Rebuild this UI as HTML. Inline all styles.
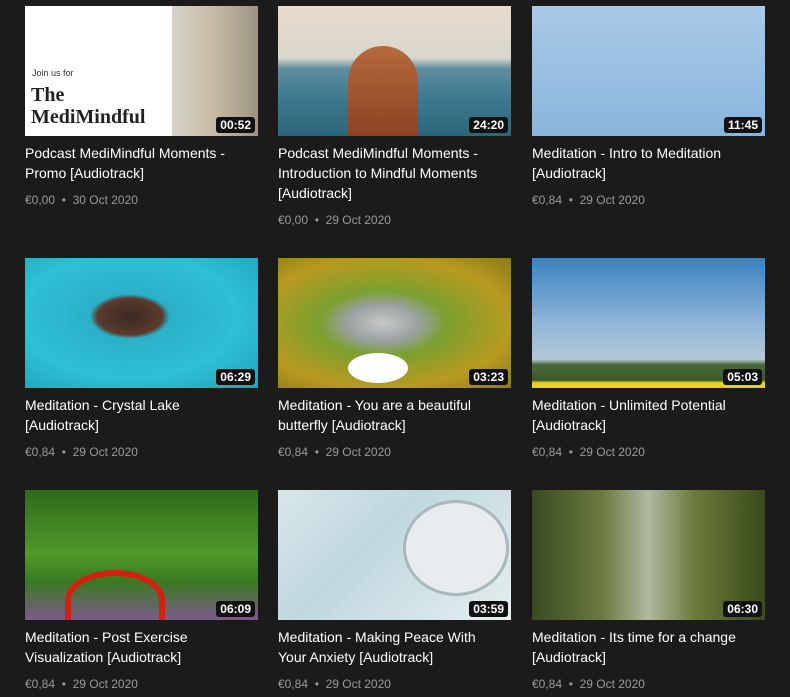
<!DOCTYPE html>
<html><head><meta charset="utf-8"><style>
body{margin:0;background:#1b1b1b;width:790px;height:697px;overflow:hidden;font-family:"Liberation Sans",sans-serif;position:relative}
.c{position:absolute;width:233px}
.t{position:relative;width:233px;height:130px;overflow:hidden}
.d{position:absolute;right:3px;bottom:3px;background:#111;color:#fff;font-weight:bold;font-size:12px;padding:1px 4px;border-radius:3px;line-height:14px}
.h{color:#fff;font-size:14px;line-height:20px;margin-top:7px;width:228px}
.m{color:#9a9a9a;font-size:12px;margin-top:9px;line-height:16px}
</style></head><body>

<div class="c" style="left:25px;top:6px"><div class="t" style="background:linear-gradient(90deg,#fff 0,#fff 63%,#d8d2c8 63%,#c9bda8 80%,#9c9482 100%)">
<div style="position:absolute;left:7px;top:62px;font-size:9px;color:#333">Join us for</div>
<div style="position:absolute;left:6px;top:78px;font-family:'Liberation Serif',serif;font-weight:bold;font-size:20px;line-height:22px;color:#222">The<br>MediMindful</div>
<div class="d">00:52</div></div>
<div class="h">Podcast MediMindful Moments - Promo [Audiotrack]</div><div class="m">€0,00 &nbsp;•&nbsp; 30 Oct 2020</div></div>

<div class="c" style="left:278px;top:6px"><div class="t" style="background:linear-gradient(180deg,#e8dccb 0,#d9d6cc 40%,#5f8fa0 48%,#3f7990 70%,#2e6579 100%)">
<div style="position:absolute;left:70px;top:40px;width:70px;height:100px;border-radius:35px 35px 0 0;background:linear-gradient(180deg,#b66a3c,#8a3d22)"></div>
<div class="d">24:20</div></div>
<div class="h">Podcast MediMindful Moments - Introduction to Mindful Moments [Audiotrack]</div><div class="m">€0,00 &nbsp;•&nbsp; 29 Oct 2020</div></div>

<div class="c" style="left:532px;top:6px"><div class="t" style="background:linear-gradient(180deg,#a9c9e6,#89b5dd)"><div class="d">11:45</div></div>
<div class="h">Meditation - Intro to Meditation [Audiotrack]</div><div class="m">€0,84 &nbsp;•&nbsp; 29 Oct 2020</div></div>

<div class="c" style="left:25px;top:258px"><div class="t" style="background:radial-gradient(ellipse at 45% 45%,#3a2a22 0,#5a3b2c 18%,#2bb0c8 22%,#30bfd5 60%,#1ea2bd 100%)"><div class="d">06:29</div></div>
<div class="h">Meditation - Crystal Lake<br>[Audiotrack]</div><div class="m">€0,84 &nbsp;•&nbsp; 29 Oct 2020</div></div>

<div class="c" style="left:278px;top:258px"><div class="t" style="background:radial-gradient(ellipse at 45% 50%,#c8c8c8 0,#9aa0a0 20%,#7aa030 35%,#b89a20 70%,#8a7a1a 100%)"><div style="position:absolute;left:70px;top:95px;width:60px;height:30px;border-radius:50%;background:#fff"></div><div class="d">03:23</div></div>
<div class="h">Meditation - You are a beautiful butterfly [Audiotrack]</div><div class="m">€0,84 &nbsp;•&nbsp; 29 Oct 2020</div></div>

<div class="c" style="left:532px;top:258px"><div class="t" style="background:linear-gradient(180deg,#3a82c0 0,#8fb5d8 50%,#b6c8d6 78%,#4b6a3a 82%,#3a5a2a 94%,#e8d020 96%,#e8d020 100%)"><div class="d">05:03</div></div>
<div class="h">Meditation - Unlimited Potential [Audiotrack]</div><div class="m">€0,84 &nbsp;•&nbsp; 29 Oct 2020</div></div>

<div class="c" style="left:25px;top:490px"><div class="t" style="background:linear-gradient(180deg,#2f6a1c,#4f9a2a 50%,#3a7a20 70%,#7a5a8a 100%)"><div style="position:absolute;left:40px;top:80px;width:100px;height:60px;border:6px solid #d32010;border-radius:50% 50% 0 0;box-sizing:border-box"></div><div class="d">06:09</div></div>
<div class="h">Meditation - Post Exercise Visualization [Audiotrack]</div><div class="m">€0,84 &nbsp;•&nbsp; 29 Oct 2020</div></div>

<div class="c" style="left:278px;top:490px"><div class="t" style="background:linear-gradient(135deg,#d8e6ea,#bfd8de 40%,#e6eef0 100%)"><div style="position:absolute;left:125px;top:10px;width:100px;height:90px;border-radius:50%;background:#e8ecee;border:3px solid #a9b8bc"></div><div class="d">03:59</div></div>
<div class="h">Meditation - Making Peace With<br>Your Anxiety [Audiotrack]</div><div class="m">€0,84 &nbsp;•&nbsp; 29 Oct 2020</div></div>

<div class="c" style="left:532px;top:490px"><div class="t" style="background:linear-gradient(90deg,#3a4a20,#6a7a40 30%,#b0b8a0 50%,#6a7a3a 70%,#3a4a1a)"><div class="d">06:30</div></div>
<div class="h">Meditation - Its time for a change [Audiotrack]</div><div class="m">€0,84 &nbsp;•&nbsp; 29 Oct 2020</div></div>

</body></html>
